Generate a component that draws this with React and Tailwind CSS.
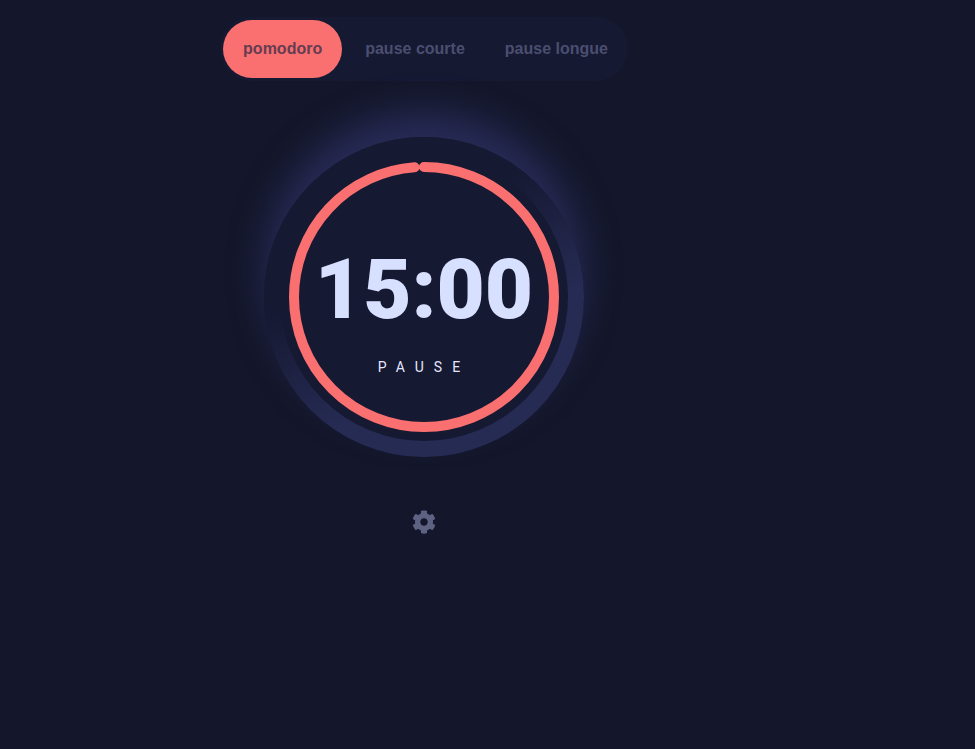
import React from "react";
import { FaCog } from "react-icons/fa";

const RADIUS = 130;
const LENGTH = 2 * Math.PI * RADIUS;

function Tabs() {
  return (
    <nav className="flex h-16 items-center rounded-[32px] bg-[#161932] text-base font-bold text-[#4a4e6f]">
      <button className="mx-[3px] h-[58px] rounded-[29px] bg-[#fa7070] px-5 text-[#653c51]">pomodoro</button>
      <button className="h-[58px] px-5">pause courte</button>
      <button className="h-[58px] px-5">pause longue</button>
    </nav>
  );
}

function Timer({ progress }) {
  return (
    <div className="mt-14 grid size-80 place-items-center rounded-full bg-linear-[150deg,#161932_36%,#262b54_66%] shadow-[0_-26px_34px_-1px_#272b56]">
      <div className="grid size-72 place-items-center rounded-full bg-[#161932]">
        <svg className="col-start-1 row-start-1 size-[270px] -rotate-90" viewBox="0 0 270 270" fill="none">
          <circle
            cx="135"
            cy="135"
            r={RADIUS}
            stroke="#fa7070"
            strokeWidth="10"
            strokeLinecap="round"
            strokeDasharray={`${LENGTH * progress} ${LENGTH}`}
          />
        </svg>
        <div className="col-start-1 row-start-1 flex flex-col items-center pt-[22px] font-['Roboto',sans-serif]">
          <div className="text-[83.4px] leading-[100px] font-black text-[#d7e0ff]">15:00</div>
          <button className="mt-[17px] text-sm leading-5 tracking-[10px] text-[#e4e6ff]">PAUSE</button>
        </div>
      </div>
    </div>
  );
}

export default function App() {
  return (
    <div className="min-h-screen bg-[#14172b] font-['Liberation_Sans',Arial,sans-serif]">
      <main className="flex w-[848px] flex-col items-center pt-[17px]">
        <Tabs />
        <Timer progress={0.988} />
        <button className="mt-[53px] text-[#5d6283]" aria-label="settings">
          <FaCog size={24} />
        </button>
      </main>
    </div>
  );
}
